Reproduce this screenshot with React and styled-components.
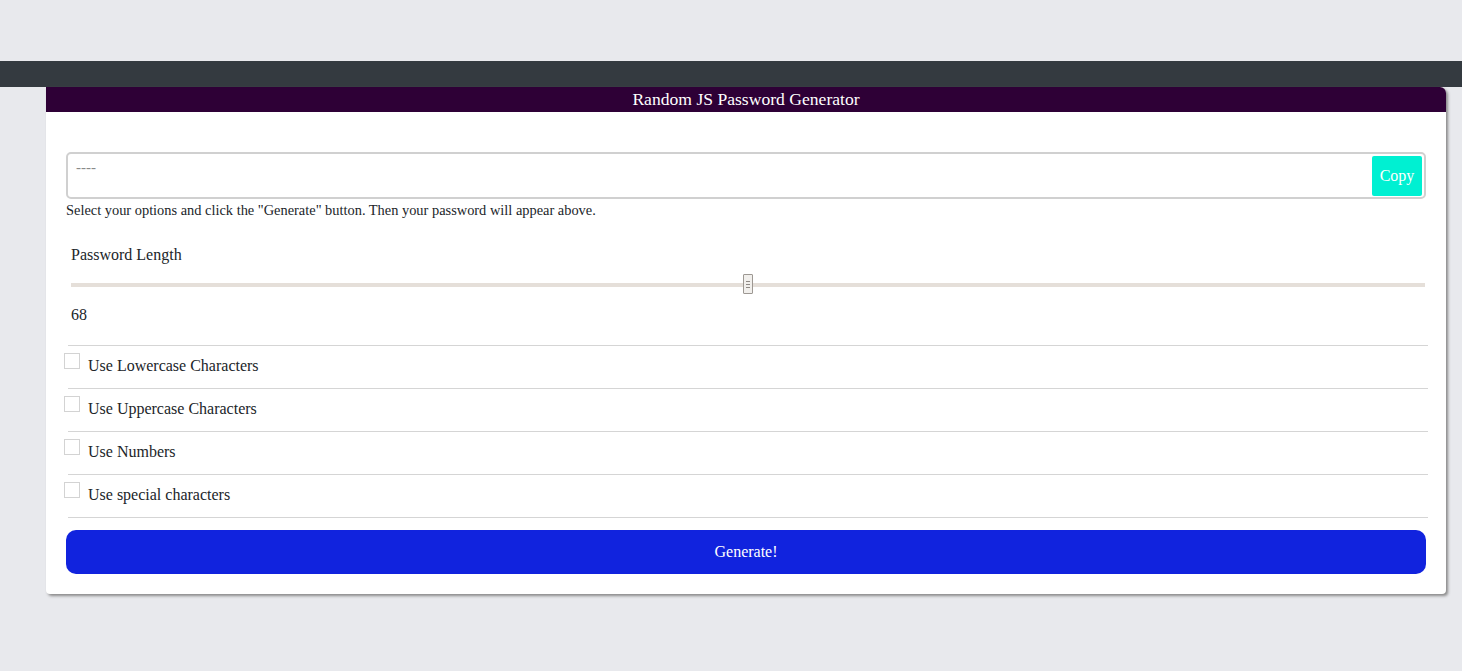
import React, { useState } from 'react';
import styled, { createGlobalStyle } from 'styled-components';

const GlobalStyle = createGlobalStyle`
	body {
		margin: 0;
		background: #e8e9ed;
		font-family: "Liberation Serif", "Times New Roman", serif;
		color: #212529;
	}
`;

const Page = styled.div`
	min-height: 671px;
	padding-top: 61px;
	box-sizing: border-box;
`;

const NavBar = styled.div`
	height: 26px;
	background: #343a40;
`;

const Card = styled.div`
	width: 1400px;
	margin-left: 46px;
	background: #fff;
	border-radius: 0 6px 4px 4px;
	box-shadow: 2px 2px 3px #8a8a8a;
	overflow: hidden;
`;

const CardHeader = styled.div`
	height: 25px;
	background: #2e0036;
	color: #fff;
	font-size: 17.6px;
	line-height: 25px;
	text-align: center;
`;

const CardBody = styled.div`
	padding: 40px 20px 20px;
`;

const OutputBox = styled.div`
	display: flex;
	align-items: center;
	height: 47px;
	box-sizing: border-box;
	border: 2px solid #d0d0d0;
	border-radius: 5px;
	padding: 2px 2px 2px 8px;
`;

const Output = styled.div`
	flex: 1;
	align-self: flex-start;
	padding-top: 3px;
	font-size: 15px;
	color: #8a8a8a;
`;

const CopyButton = styled.button`
	width: 50px;
	height: 40px;
	border: none;
	border-radius: 2px;
	background: #00f0d2;
	color: #fff;
	font-family: inherit;
	font-size: 16px;
	padding: 0;
`;

const Hint = styled.p`
	margin: 4px 0 0;
	font-size: 14.4px;
	line-height: 15px;
`;

const LengthBlock = styled.div`
	padding: 28px 1px 0 5px;
`;

const LengthLabel = styled.div`
	font-size: 16px;
	line-height: 17px;
`;

const Track = styled.div`
	position: relative;
	height: 4px;
	margin: 20px 0 0;
	background: #e5dfd9;
`;

const Thumb = styled.div`
	position: absolute;
	top: -9px;
	width: 10px;
	height: 20px;
	margin-left: -5px;
	box-sizing: border-box;
	border: 1px solid #9d9893;
	border-radius: 1px;
	background: #f1efec;
	display: flex;
	flex-direction: column;
	justify-content: center;
	align-items: center;
	gap: 2px;
`;

const Grip = styled.span`
	width: 4px;
	height: 1px;
	background: #8f8a86;
`;

const LengthValue = styled.div`
	margin-top: 19px;
	font-size: 16px;
	line-height: 17px;
`;

const Options = styled.div`
	margin: 22px -2px 0 -2px;
`;

const OptionRow = styled.label`
	display: flex;
	align-items: flex-start;
	height: 42px;
	border-top: 1px solid #d5d5d5;
	margin-left: 4px;
	&:last-child {
		border-bottom: 1px solid #d5d5d5;
	}
`;

const Box = styled.span`
	width: 16px;
	height: 16px;
	margin: 7px 8px 0 -4px;
	box-sizing: border-box;
	border: 1px solid #d3d3d3;
	background: #fff;
`;

const OptionText = styled.span`
	font-size: 16px;
	line-height: 17px;
	margin-top: 11px;
`;

const GenerateButton = styled.button`
	display: block;
	width: 100%;
	height: 44px;
	margin-top: 12px;
	border: none;
	border-radius: 10px;
	background: #1123de;
	color: #fff;
	font-family: inherit;
	font-size: 16px;
`;

const options = [
	'Use Lowercase Characters',
	'Use Uppercase Characters',
	'Use Numbers',
	'Use special characters'
];

export default function App() {
	const [length] = useState(68);
	const min = 8;
	const max = 128;
	const pct = ((length - min) / (max - min)) * 100;

	return (
		<Page>
			<GlobalStyle />
			<NavBar />
			<Card>
				<CardHeader>Random JS Password Generator</CardHeader>
				<CardBody>
					<OutputBox>
						<Output>----</Output>
						<CopyButton>Copy</CopyButton>
					</OutputBox>
					<Hint>
						Select your options and click the "Generate" button. Then your password will appear above.
					</Hint>
					<LengthBlock>
						<LengthLabel>Password Length</LengthLabel>
						<Track>
							<Thumb style={{ left: `${pct}%` }}>
								<Grip />
								<Grip />
								<Grip />
							</Thumb>
						</Track>
						<LengthValue>{length}</LengthValue>
					</LengthBlock>
					<Options>
						{options.map((text) => (
							<OptionRow key={text}>
								<Box />
								<OptionText>{text}</OptionText>
							</OptionRow>
						))}
					</Options>
					<GenerateButton>Generate!</GenerateButton>
				</CardBody>
			</Card>
		</Page>
	);
}
